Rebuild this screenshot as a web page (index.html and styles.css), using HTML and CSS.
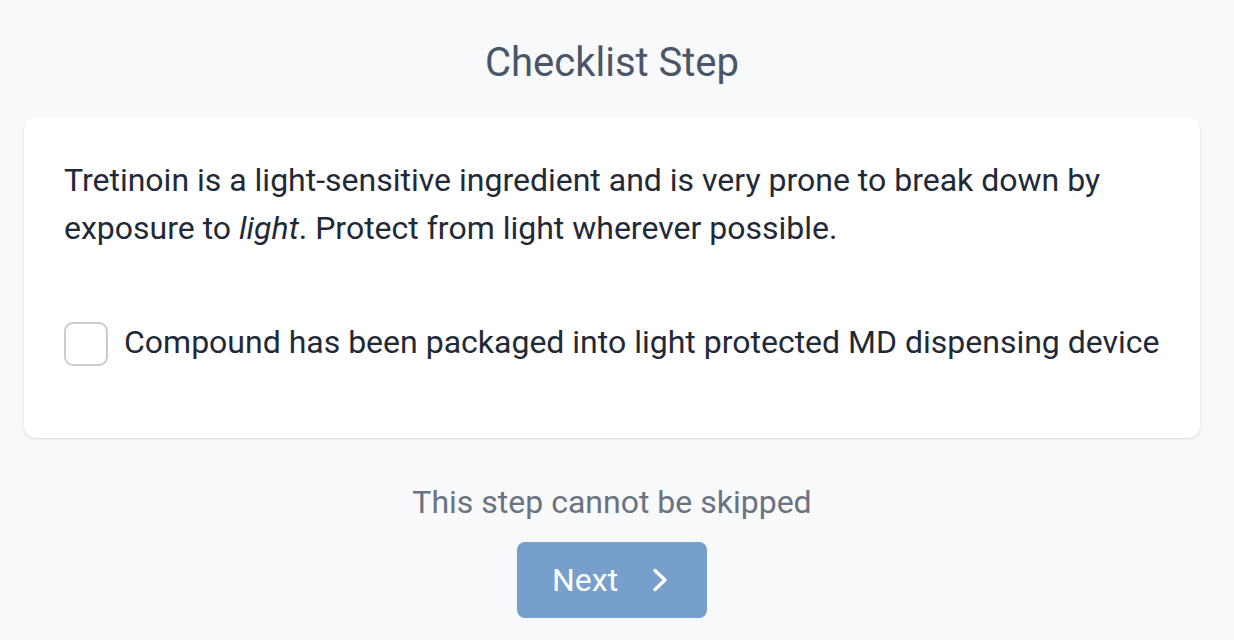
FILE: index.html
```html
<!DOCTYPE html>
<html lang="en">
<head>
<meta charset="utf-8">
<title>Checklist Step</title>
<link rel="stylesheet" href="styles.css">
</head>
<body>
<main class="page">
  <h1 class="title">Checklist Step</h1>
  <section class="card">
    <p class="note">Tretinoin is a light-sensitive ingredient and is very prone to break down by exposure to <em>light</em>. Protect from light wherever possible.</p>
    <label class="check-row">
      <input type="checkbox" class="check-input">
      <span class="check-box"></span>
      <span class="check-label">Compound has been packaged into light protected MD dispensing device</span>
    </label>
  </section>
  <p class="skip-note">This step cannot be skipped</p>
  <div class="actions">
    <button class="next-btn" type="button">
      <span>Next</span>
      <svg class="chev" width="16" height="24" viewBox="0 0 16 24" aria-hidden="true"><polyline points="3,2.5 13,12 3,21.5" fill="none" stroke="#ffffff" stroke-width="3.4" stroke-linecap="round" stroke-linejoin="round"/></svg>
    </button>
  </div>
</main>
</body>
</html>
```
FILE: styles.css
```css
* { box-sizing: border-box; }
html, body { margin: 0; padding: 0; }
body {
  background: #f8f9fb;
  font-family: Roboto, "Liberation Sans", Arial, sans-serif;
  width: 1234px;
  height: 640px;
  overflow: hidden;
}
.page {
  padding: 33px 34px 0 24px;
  display: flex;
  flex-direction: column;
}
.title {
  margin: 0 0 24px;
  font-size: 40px;
  line-height: 60px;
  font-weight: 400;
  color: #4a5568;
  text-align: center;
}
.card {
  background: #ffffff;
  border-radius: 12px;
  box-shadow: 0 1px 3px rgba(0, 0, 0, 0.1), 0 1px 2px rgba(0, 0, 0, 0.06);
  padding: 39px 40px 72px;
  height: 321px;
}
.note {
  margin: 0 0 66px;
  font-size: 32px;
  line-height: 48px;
  color: #1f2937;
}
.note em { font-style: italic; }
.check-row {
  display: flex;
  align-items: center;
  gap: 16px;
  height: 48px;
}
.check-input { display: none; }
.check-box {
  width: 44px;
  height: 44px;
  margin-top: 4px;
  border: 2px solid #c9ccd3;
  border-radius: 9px;
  background: #fff;
  flex: none;
}
.check-label {
  font-size: 32px;
  line-height: 48px;
  color: #1f2937;
  white-space: nowrap;
}
.skip-note {
  margin: 40px 0 16px;
  text-align: center;
  font-size: 32px;
  line-height: 48px;
  color: #6b7280;
}
.actions {
  display: flex;
  justify-content: center;
}
.next-btn {
  display: inline-flex;
  align-items: center;
  gap: 34px;
  height: 76px;
  width: 190px;
  padding: 0 0 0 35px;
  border: none;
  border-radius: 8px;
  background: #769fcb;
  color: #ffffff;
  font-family: Roboto, "Liberation Sans", Arial, sans-serif;
  font-size: 32px;
  line-height: 48px;
}
.chev { display: block; flex: none; }
```
